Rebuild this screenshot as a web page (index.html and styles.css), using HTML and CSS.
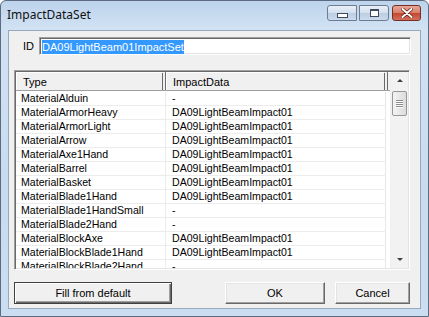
FILE: index.html
```html
<!DOCTYPE html>
<html lang="en">
<head>
    <meta charset="UTF-8">
    <title>ImpactDataSet</title>
    <link rel="stylesheet" href="styles.css">
</head>
<body>
    <div class="window">
        <div class="titlebar">
            <span class="title">ImpactDataSet</span>
            <div class="caption-buttons">
                <div class="cap-btn cap-min"><span class="min-glyph"></span></div>
                <div class="cap-btn cap-max"><span class="max-glyph"></span></div>
                <div class="cap-btn cap-close">
                    <svg width="12" height="10" viewBox="0 0 12 10">
                        <path d="M1.5 1 L10.5 9 M10.5 1 L1.5 9" stroke="#5a1a10" stroke-width="3.4" stroke-linecap="round"/>
                        <path d="M1.5 1 L10.5 9 M10.5 1 L1.5 9" stroke="#fff" stroke-width="2" stroke-linecap="round"/>
                    </svg>
                </div>
            </div>
        </div>
        <div class="client">
            <div class="id-row">
                <label for="id-field" class="id-label">ID</label>
                <div class="edit" id="id-field"><span class="selected">DA09LightBeam01ImpactSet</span></div>
            </div>

            <div class="list">
                <div class="table">
                    <div class="header">
                        <div class="head-cell col-type">Type</div>
                        <div class="head-cell col-data">ImpactData</div>
                        <div class="head-fill"></div>
                    </div>
                    <div class="rows">
                        <div class="row"><div class="cell col-type">MaterialAlduin</div><div class="cell col-data">-</div></div>
                        <div class="row"><div class="cell col-type">MaterialArmorHeavy</div><div class="cell col-data">DA09LightBeamImpact01</div></div>
                        <div class="row"><div class="cell col-type">MaterialArmorLight</div><div class="cell col-data">DA09LightBeamImpact01</div></div>
                        <div class="row"><div class="cell col-type">MaterialArrow</div><div class="cell col-data">DA09LightBeamImpact01</div></div>
                        <div class="row"><div class="cell col-type">MaterialAxe1Hand</div><div class="cell col-data">DA09LightBeamImpact01</div></div>
                        <div class="row"><div class="cell col-type">MaterialBarrel</div><div class="cell col-data">DA09LightBeamImpact01</div></div>
                        <div class="row"><div class="cell col-type">MaterialBasket</div><div class="cell col-data">DA09LightBeamImpact01</div></div>
                        <div class="row"><div class="cell col-type">MaterialBlade1Hand</div><div class="cell col-data">DA09LightBeamImpact01</div></div>
                        <div class="row"><div class="cell col-type">MaterialBlade1HandSmall</div><div class="cell col-data">-</div></div>
                        <div class="row"><div class="cell col-type">MaterialBlade2Hand</div><div class="cell col-data">-</div></div>
                        <div class="row"><div class="cell col-type">MaterialBlockAxe</div><div class="cell col-data">DA09LightBeamImpact01</div></div>
                        <div class="row"><div class="cell col-type">MaterialBlockBlade1Hand</div><div class="cell col-data">DA09LightBeamImpact01</div></div>
                        <div class="row"><div class="cell col-type">MaterialBlockBlade2Hand</div><div class="cell col-data">-</div></div>
                    </div>
                </div>
                <div class="scrollbar">
                    <div class="arrow arrow-up"></div>
                    <div class="track">
                        <div class="thumb">
                            <span class="grip"></span>
                            <span class="grip"></span>
                            <span class="grip"></span>
                            <span class="grip"></span>
                        </div>
                    </div>
                    <div class="arrow arrow-down"></div>
                </div>
            </div>

            <div class="buttons">
                <button class="btn btn-fill">Fill from default</button>
                <button class="btn btn-ok">OK</button>
                <button class="btn btn-cancel">Cancel</button>
            </div>
        </div>
    </div>
</body>
</html>
```

FILE: styles.css
```css
body {
    margin: 0;
    background: #fff;
    font-family: "Liberation Sans", Arial, sans-serif;
    font-size: 10.6px;
}
.window {
    width: 429px;
    height: 317px;
    box-sizing: border-box;
    border: 1px solid #5c6b80;
    border-radius: 6px 6px 0 0;
    background: linear-gradient(#bdd4ec, #d2e2f3 29px, #c8dbef 60%, #cbdef1);
    display: flex;
    flex-direction: column;
}
.titlebar {
    height: 29px;
    display: flex;
    align-items: center;
    padding: 0 7px 0 6px;
}
.title {
    font-family: "Noto Sans", "Open Sans", sans-serif;
    font-size: 12px;
    color: #111;
    margin-top: -2px;
    flex: 1;
}
.caption-buttons {
    display: flex;
    align-self: flex-start;
    margin-top: 4px;
}
.cap-btn {
    height: 16px;
    box-sizing: border-box;
    border: 1px solid #6d7c91;
    display: flex;
    align-items: center;
    justify-content: center;
}
.cap-min {
    width: 30px;
    border-radius: 3px 0 0 3px;
    background: linear-gradient(#e9f0f8, #d3dfee 50%, #bccde3 51%, #cbdaec);
}
.cap-max {
    width: 30px;
    margin-left: 2px;
    border-radius: 0 3px 3px 0;
    background: linear-gradient(#e9f0f8, #d3dfee 50%, #bccde3 51%, #cbdaec);
}
.cap-close {
    width: 29px;
    margin-left: 3px;
    border-radius: 3px;
    border-color: #7a2f24;
    background: linear-gradient(#e8a797, #d67e68 50%, #c6462f 51%, #d1705a);
}
.min-glyph {
    width: 9px;
    height: 3px;
    margin-top: 5px;
    border: 1px solid #3d4a5c;
    background: #fff;
}
.max-glyph {
    width: 7px;
    height: 5px;
    border: 1px solid #3d4a5c;
    border-top-width: 2px;
    background: #fff;
    box-shadow: inset 0 0 0 1px #fff;
}
.client {
    margin: 0 7px;
    height: 279px;
    box-sizing: border-box;
    border: 1px solid #98a9be;
    background: #f0f0f0;
}
.id-row {
    display: flex;
    align-items: center;
    margin-top: 6px;
    height: 18px;
}
.id-label {
    width: 16px;
    margin-left: 14px;
    font-size: 11px;
    color: #000;
}
.edit {
    width: 372px;
    height: 18px;
    box-sizing: border-box;
    border: 1px solid;
    border-color: #a0a0a0 #fff #fff #a0a0a0;
    box-shadow: inset 1px 1px 0 #696969, inset -1px -1px 0 #e3e3e3;
    background: #fff;
    padding: 2px 0 0 2px;
    line-height: 14px;
    font-size: 11px;
}
.selected {
    display: inline-block;
    background: #3399ff;
    color: #fff;
    height: 14px;
}
.list {
    display: flex;
    margin: 15px 0 0 5px;
    width: 396px;
    height: 200px;
    box-sizing: border-box;
    border: 1px solid;
    border-color: #a0a0a0 #fff #fff #a0a0a0;
    box-shadow: inset 1px 1px 0 #696969, inset -1px -1px 0 #e3e3e3;
    padding: 1px;
    background: #fff;
    overflow: hidden;
}
.table {
    flex: 1;
    overflow: hidden;
}
.header {
    display: flex;
    height: 19px;
    box-sizing: border-box;
    background: #f0f0f0;
    border-bottom: 1px solid #a0a0a0;
}
.head-cell {
    box-sizing: border-box;
    padding: 3px 0 0 6px;
    border-top: 1px solid #fff;
    border-left: 1px solid #fff;
    border-right: 4px double #6a6a6a;
    font-size: 11px;
}
.head-fill {
    flex: 1;
    border-top: 1px solid #fff;
}
.col-type {
    width: 150px;
    flex: none;
}
.col-data {
    width: 222px;
    flex: none;
}
.rows {
    padding-top: 1px;
}
.row {
    display: flex;
    height: 14px;
    box-sizing: border-box;
    border-bottom: 1px solid #ececec;
    width: 370px;
}
.cell {
    box-sizing: border-box;
    padding-left: 5px;
    line-height: 13px;
    color: #000;
    white-space: nowrap;
    overflow: hidden;
}
.cell.col-type {
    border-right: 1px solid #ececec;
}
.cell.col-data {
    width: 220px;
    padding-left: 6px;
    border-right: 1px solid #e6e6e6;
}
.scrollbar {
    width: 17px;
    display: flex;
    flex-direction: column;
    background: #f2f2f2;
    border-left: 1px solid #f0f0f0;
}
.arrow {
    height: 17px;
    display: flex;
    align-items: center;
    justify-content: center;
}
.arrow-up::after {
    content: "";
    border: 3px solid transparent;
    border-bottom: 3px solid #404040;
    margin-top: -3px;
}
.arrow-down::after {
    content: "";
    border: 3px solid transparent;
    border-top: 3px solid #404040;
    margin-top: 3px;
}
.track {
    flex: 1;
    padding-top: 2px;
}
.thumb {
    margin: 0 1px;
    height: 25px;
    box-sizing: border-box;
    border: 1px solid #979797;
    border-radius: 2px;
    background: linear-gradient(90deg, #f4f4f4, #e8e8e8 50%, #dcdcdc);
    display: flex;
    flex-direction: column;
    align-items: center;
    justify-content: center;
    gap: 1px;
}
.grip {
    width: 7px;
    height: 1px;
    background: #8a8a8a;
    box-shadow: 0 1px 0 #fff;
}
.buttons {
    display: flex;
    margin: 12px 0 0 5px;
}
.btn {
    height: 22px;
    box-sizing: border-box;
    font-family: "Liberation Sans", Arial, sans-serif;
    font-size: 11px;
    color: #000;
    background: #f0f0f0;
    border: 1px solid;
    border-color: #fff #696969 #696969 #fff;
    box-shadow: inset -1px -1px 0 #a0a0a0, inset 1px 1px 0 #e3e3e3;
    padding: 0;
}
.btn-fill {
    width: 158px;
    border-color: #404040;
    box-shadow: inset 1px 1px 0 #fff, inset -1px -1px 0 #696969, inset -2px -2px 0 #a0a0a0;
}
.btn-ok {
    width: 100px;
    margin-left: 53px;
}
.btn-cancel {
    width: 75px;
    margin-left: 10px;
}
```
